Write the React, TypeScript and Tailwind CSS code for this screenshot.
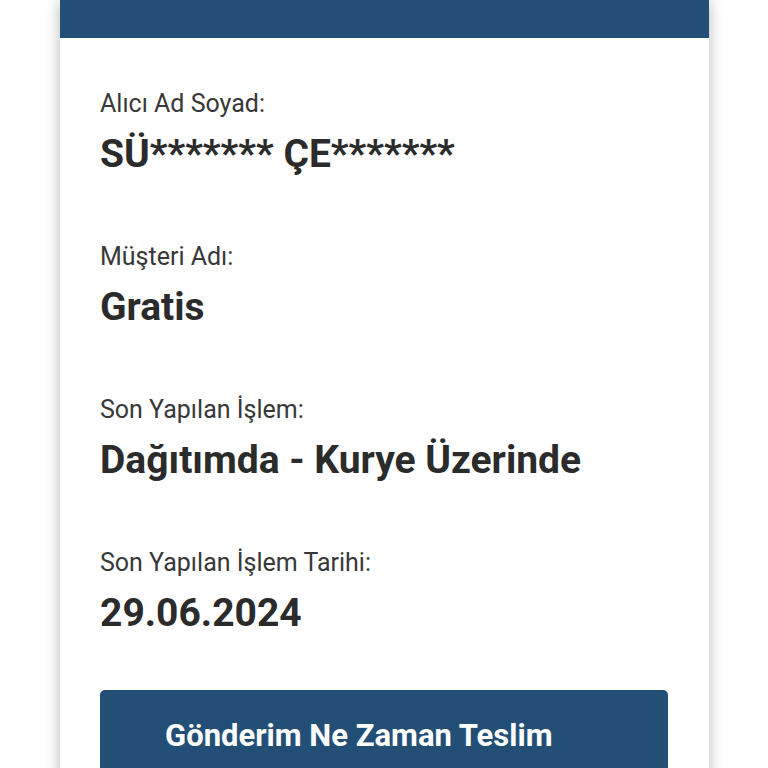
export default function App() {
  const rows = [
    { label: 'Alıcı Ad Soyad:', value: 'SÜ******* ÇE*******' },
    { label: 'Müşteri Adı:', value: 'Gratis' },
    { label: 'Son Yapılan İşlem:', value: 'Dağıtımda - Kurye Üzerinde' },
    { label: 'Son Yapılan İşlem Tarihi:', value: '29.06.2024' },
  ];

  return (
    <div className="h-[768px] w-[768px] overflow-hidden bg-white font-['Roboto',sans-serif]">
      <div className="ml-[60px] w-[649px] h-[800px] bg-white shadow-[0_0_14px_rgba(0,0,0,0.28)]">
        <div className="h-[38px] bg-[#234f76]" />
        <div className="px-[40px] pt-[51px]">
          {rows.map((row) => (
            <div key={row.label} className="mb-[65px]">
              <div className="text-[25px] leading-[29px] text-[#383838]">{row.label}</div>
              <div className="mt-[13px] text-[39px] leading-[46px] font-bold text-[#2b2b2b]">
                {row.value}
              </div>
            </div>
          ))}
          <div className="-mt-[11px] w-[568px] h-[110px] rounded-[5px] bg-[#234f76] pl-[65px] pt-[28px]">
            <div className="text-[31px] leading-[36px] font-bold text-white whitespace-nowrap">
              Gönderim Ne Zaman Teslim
            </div>
          </div>
        </div>
      </div>
    </div>
  );
}
